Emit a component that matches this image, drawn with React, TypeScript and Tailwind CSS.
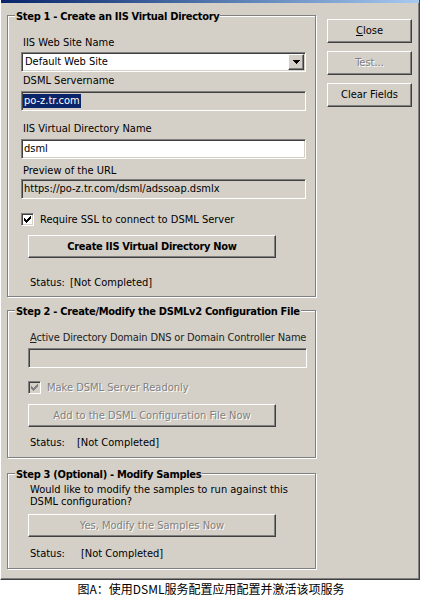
import React from "react";

const F = "font-['DejaVu_Sans_Condensed',sans-serif] text-[11px] leading-[14px]";
const DIS = "text-[#808080] [text-shadow:1px_1px_0_#ffffff]";
const SUNKEN =
  "border border-t-[#808080] border-l-[#808080] border-b-white border-r-white shadow-[inset_1px_1px_0_#404040,inset_-1px_-1px_0_#d4d0c8]";
const RAISED =
  "border border-t-white border-l-white border-b-[#404040] border-r-[#404040] shadow-[inset_-1px_-1px_0_#808080]";

function Check({ disabled }: { disabled?: boolean }) {
  return (
    <div
      className={`w-[13px] h-[13px] ${SUNKEN} ${disabled ? "bg-[#d4d0c8]" : "bg-white"} flex items-center justify-center shrink-0`}
    >
      <svg width="9" height="9" viewBox="0 0 9 9" shapeRendering="crispEdges">
        <polygon points="1,3 3,5 8,0 8,3 3,8 1,6" fill={disabled ? "#808080" : "#000"} />
      </svg>
    </div>
  );
}

function Group({
  title,
  className,
  children,
}: {
  title: string;
  className: string;
  children: React.ReactNode;
}) {
  return (
    <div
      className={`relative w-[309px] border border-[#808080] shadow-[inset_1px_1px_0_#ffffff,1px_1px_0_#ffffff] ${className}`}
    >
      <div className="absolute left-[7px] top-[-6px] bg-[#d4d0c8] px-[1px] font-['DejaVu_Sans_Condensed',sans-serif] font-bold text-[11px] leading-[14px] tracking-[-0.3px] text-black whitespace-nowrap">
        {title}
      </div>
      {children}
    </div>
  );
}

function Status({ w }: { w: string }) {
  return (
    <div className="flex pl-[22px] whitespace-nowrap">
      <span className={w}>Status:</span>
      <span>[Not Completed]</span>
    </div>
  );
}

export default function App() {
  return (
    <div className={`w-[422px] h-[597px] bg-white ${F} text-black`}>
      <div className="w-[420px] h-[580px] bg-[#d4d0c8] border-l border-l-[#ffffff] border-r border-r-[#404040] border-b border-b-[#404040] shadow-[inset_-1px_-1px_0_#808080] flex flex-col">
        <div className="h-[3px] bg-gradient-to-r from-[#0a246a] to-[#a6caf0]" />
        <div className="flex">
          {/* left column */}
          <div className="pl-[6px] pt-[12px] flex flex-col">
            <Group title="Step 1 - Create an IIS Virtual Directory" className="h-[282px]">
              <div className="pt-[20px] flex flex-col">
                <div className="pl-[15px]">IIS Web Site Name</div>
                <div className={`ml-[13px] mt-[2px] w-[285px] h-[20px] ${SUNKEN} bg-white flex items-center`}>
                  <span className="pl-[3px] flex-1">Default Web Site</span>
                  <div className={`w-[16px] h-[16px] mr-[1px] ${RAISED} bg-[#d4d0c8] flex items-center justify-center`}>
                    <svg width="7" height="4" viewBox="0 0 7 4" shapeRendering="crispEdges">
                      <polygon points="0,0 7,0 3.5,4" fill="#000" />
                    </svg>
                  </div>
                </div>
                <div className="pl-[15px] mt-[2px]">DSML Servername</div>
                <div className={`ml-[13px] mt-[3px] w-[285px] h-[20px] ${SUNKEN} bg-[#d4d0c8] flex items-center`}>
                  <span className="ml-[1px] bg-[#0a246a] text-white px-[1px]">po-z.tr.com</span>
                </div>
                <div className="pl-[15px] mt-[11px]">IIS Virtual Directory Name</div>
                <div className={`ml-[13px] mt-[3px] w-[285px] h-[20px] ${SUNKEN} bg-white flex items-center`}>
                  <span className="pl-[2px]">dsml</span>
                </div>
                <div className="pl-[15px] mt-[5px]">Preview of the URL</div>
                <div className={`ml-[13px] mt-[1px] w-[285px] h-[20px] ${SUNKEN} bg-[#d4d0c8] flex items-center`}>
                  <span className="pl-[2px]">https://po-z.tr.com/dsml/adssoap.dsmlx</span>
                </div>
                <div className="ml-[13px] mt-[14px] flex items-center gap-[6px] h-[13px]">
                  <Check />
                  <span>Require SSL to connect to DSML Server</span>
                </div>
                <div
                  className={`ml-[20px] mt-[9px] w-[248px] h-[23px] ${RAISED} flex items-center justify-center font-bold tracking-[-0.3px]`}
                >
                  Create IIS Virtual Directory Now
                </div>
                <div className="mt-[18px]">
                  <Status w="w-[40px]" />
                </div>
              </div>
            </Group>

            <Group title="Step 2 - Create/Modify the DSMLv2 Configuration File" className="h-[148px] mt-[13px]">
              <div className="pt-[20px] flex flex-col">
                <div className="pl-[22px] text-[#222] tracking-[-0.15px] whitespace-nowrap">
                  <span className="underline">A</span>ctive Directory Domain DNS or Domain Controller Name
                </div>
                <div className={`ml-[20px] mt-[3px] w-[279px] h-[20px] ${SUNKEN} bg-[#d4d0c8]`} />
                <div className="ml-[20px] mt-[13px] flex items-center gap-[6px] h-[13px]">
                  <Check disabled />
                  <span className={DIS}>Make DSML Server Readonly</span>
                </div>
                <div className={`ml-[20px] mt-[10px] w-[248px] h-[23px] ${RAISED} flex items-center justify-center ${DIS}`}>
                  Add to the DSML Configuration File Now
                </div>
                <div className="mt-[9px]">
                  <Status w="w-[47px]" />
                </div>
              </div>
            </Group>

            <Group title="Step 3 (Optional) - Modify Samples" className="h-[96px] mt-[15px]">
              <div className="pt-[10px] flex flex-col">
                <div className="pl-[22px] leading-[12px]">
                  Would like to modify the samples to run against this
                  <br />
                  DSML configuration?
                </div>
                <div className={`ml-[20px] mt-[6px] w-[248px] h-[23px] ${RAISED} flex items-center justify-center ${DIS}`}>
                  Yes, Modify the Samples Now
                </div>
                <div className="mt-[10px]">
                  <Status w="w-[51px]" />
                </div>
              </div>
            </Group>
          </div>

          {/* right column */}
          <div className="ml-[11px] pt-[16px] flex flex-col gap-[8px]">
            <div className={`w-[85px] h-[24px] ${RAISED} flex items-center justify-center`}>
              <span>
                <span className="underline">C</span>lose
              </span>
            </div>
            <div className={`w-[85px] h-[24px] ${RAISED} flex items-center justify-center ${DIS}`}>Test...</div>
            <div className={`w-[85px] h-[24px] ${RAISED} flex items-center justify-center`}>Clear Fields</div>
          </div>
        </div>
      </div>
      <div className="h-[17px] flex items-center justify-center font-['Noto_Sans_CJK_SC',sans-serif] text-[12px] leading-[14px] text-black">
        图A：使用DSML服务配置应用配置并激活该项服务
      </div>
    </div>
  );
}
